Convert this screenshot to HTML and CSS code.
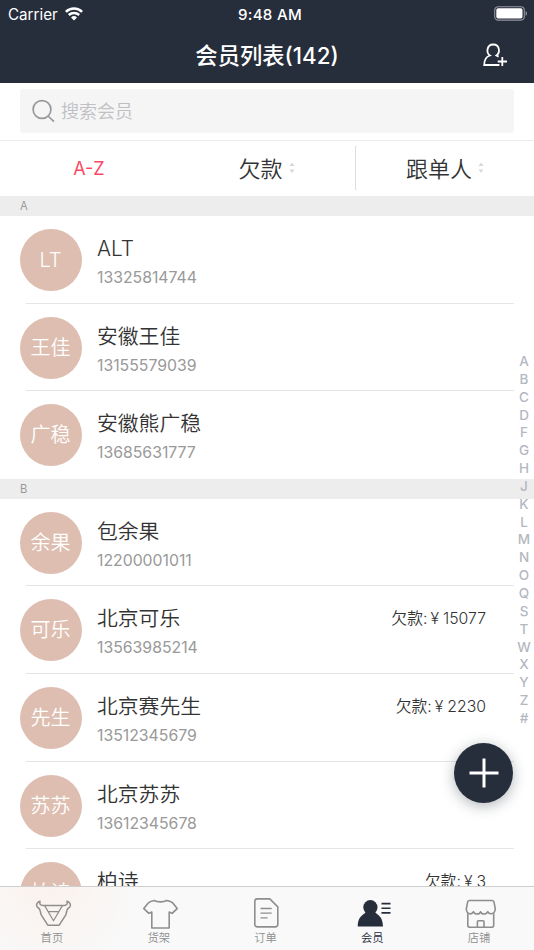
FILE: index.html
```html
<!DOCTYPE html>
<html lang="zh-CN">
<head>
    <meta charset="UTF-8">
    <meta name="viewport" content="width=device-width, initial-scale=1.0">
    <title>会员列表</title>
    <link rel="stylesheet" href="styles.css">
</head>
<body>
    <header class="header">
        <div class="status-bar">
            <div class="carrier">
                <span>Carrier</span>
                <svg width="18" height="14" viewBox="0 0 18 14" fill="none" stroke="#fff" stroke-width="2.5">
                    <path d="M0.9 4.9a11.6 11.6 0 0 1 16.2 0"/>
                    <path d="M3.8 8a7.5 7.5 0 0 1 10.4 0"/>
                    <path d="M9 13.5L6 10.5a4.3 4.3 0 0 1 6 0z" fill="#fff" stroke="none"/>
                </svg>
            </div>
            <div class="time">9:48 AM</div>
            <div class="battery">
                <svg width="34" height="15" viewBox="0 0 34 15">
                    <rect x="0.7" y="-0.3" width="29.6" height="13.4" rx="3.5" fill="none" stroke="#9296a0" stroke-width="1.1"/>
                    <rect x="2.3" y="1.3" width="26.2" height="10.2" rx="1.8" fill="#fff"/>
                    <path d="M31.6 4v4.8c1.9-.8 1.9-4 0-4.8z" fill="#9296a0"/>
                </svg>
            </div>
        </div>
        <div class="nav-bar">
            <h1>会员列表(142)</h1>
            <button class="add-member" aria-label="添加会员">
                <svg width="26" height="24" viewBox="0 0 26 24" fill="none" stroke="#fff" stroke-width="1.8">
                    <path d="M17.4 22H2.2c0-5 1.8-8.3 5.7-9.5C6 11.2 5.1 9.1 5.5 6.5 6 3.4 8.2 1.5 11.2 1.5s5.3 1.9 5.7 5c.3 2.5-.6 4.700-2.5 6l2.200 1.100"/>
                    <path d="M15.7 18.5h9.300M20.300 14v9"/>
                </svg>
            </button>
        </div>
    </header>

    <div class="search">
        <div class="search-box">
            <svg width="23" height="24" viewBox="0 0 23 24" fill="none" stroke="#999" stroke-width="1.7">
                <circle cx="10" cy="10.5" r="8.9"/>
                <path d="M16 17l6 5.6"/>
            </svg>
            <span>搜索会员</span>
        </div>
    </div>

    <div class="tabs">
        <div class="tab active">A-Z</div>
        <div class="tab">
            <span>欠款</span>
            <svg width="6" height="12" viewBox="0 0 6 12" fill="#d8d8d8"><path d="M.5 4L3 .5 5.5 4zM.5 7.5h5L3 11z"/></svg>
        </div>
        <div class="tab divided">
            <span>跟单人</span>
            <svg width="6" height="12" viewBox="0 0 6 12" fill="#d8d8d8"><path d="M.5 4L3 .5 5.5 4zM.5 7.5h5L3 11z"/></svg>
        </div>
    </div>

    <main class="members">
        <div class="letter">A</div>
        <div class="member">
            <div class="avatar">LT</div>
            <div class="info"><div class="name">ALT</div><div class="phone">13325814744</div></div>
        </div>
        <div class="member">
            <div class="avatar">王佳</div>
            <div class="info"><div class="name">安徽王佳</div><div class="phone">13155579039</div></div>
        </div>
        <div class="member last">
            <div class="avatar">广稳</div>
            <div class="info"><div class="name">安徽熊广稳</div><div class="phone">13685631777</div></div>
        </div>
        <div class="letter">B</div>
        <div class="member">
            <div class="avatar">余果</div>
            <div class="info"><div class="name">包余果</div><div class="phone">12200001011</div></div>
        </div>
        <div class="member">
            <div class="avatar">可乐</div>
            <div class="info"><div class="name">北京可乐</div><div class="phone">13563985214</div></div>
            <div class="debt">欠款:<i>¥</i>15077</div>
        </div>
        <div class="member">
            <div class="avatar">先生</div>
            <div class="info"><div class="name">北京赛先生</div><div class="phone">13512345679</div></div>
            <div class="debt">欠款:<i>¥</i>2230</div>
        </div>
        <div class="member">
            <div class="avatar">苏苏</div>
            <div class="info"><div class="name">北京苏苏</div><div class="phone">13612345678</div></div>
        </div>
        <div class="member">
            <div class="avatar">柏诗</div>
            <div class="info"><div class="name">柏诗</div></div>
            <div class="debt">欠款:<i>¥</i>3</div>
        </div>
    </main>

    <div class="index">
        <span>A</span><span>B</span><span>C</span><span>D</span><span>F</span><span>G</span><span>H</span>
        <span>J</span><span>K</span><span>L</span><span>M</span><span>N</span><span>O</span><span>Q</span>
        <span>S</span><span>T</span><span>W</span><span>X</span><span>Y</span><span>Z</span><span>#</span>
    </div>

    <button class="fab" aria-label="添加">
        <svg width="30" height="30" viewBox="0 0 30 30" stroke="#fff" stroke-width="3"><path d="M.5 15h29M15 .5v29"/></svg>
    </button>

    <nav class="tab-bar">
        <a class="item">
            <svg width="36" height="30" viewBox="0 0 36 30" fill="none" stroke="#8e8e8e" stroke-width="1.5" stroke-linejoin="round">
                <path d="M5 1.3C2 2.2.9 4.6 2 6.6c.8 1.3 2.600 1.800 3 3.600l1.200 4.600 6.600 10.400h11.400l6.600-10.400 1.200-4.600c.4-1.800 2.200-2.300 3-3.600 1.100-2 0-4.400-3-5.300.7 2.700-.3 4.200-2.800 4.200H7.800C5.300 5.500 4.300 4 5 1.300z"/>
                <path d="M9.6 5.6l8.900 15.200 8.900-15.200M13.2 11.700h10.600" stroke-width="1.2"/>
            </svg>
            <span>首页</span>
        </a>
        <a class="item">
            <svg width="36" height="30" viewBox="0 0 36 30" fill="none" stroke="#8e8e8e" stroke-width="1.6" stroke-linejoin="round">
                <path d="M12.2.5C15 2.3 21.8 2.3 24.600.5c3.200.6 5.200 1.300 6.400 2.700l4.200 5.400-5.100 4.800-2.900-1.400v16H9.800V12l-2.900 1.400-5.100-4.800L6 3.200C7.200 1.800 9 1.100 12.200.5z"/>
            </svg>
            <span>货架</span>
        </a>
        <a class="item">
            <svg width="36" height="30" viewBox="0 0 36 30" fill="none" stroke="#8e8e8e" stroke-width="1.6" stroke-linejoin="round">
                <path d="M9.3-1.1h12.500l8 8v17.500a2.500 2.500 0 0 1-2.500 2.500h-18a2.500 2.500 0 0 1-2.500-2.500V1.400a2.500 2.500 0 0 1 2.500-2.500z"/>
                <path d="M12.5 8.5h11.200M12.5 13.200h11.200M12.5 17.900h7" stroke-width="1.3"/>
            </svg>
            <span>订单</span>
        </a>
        <a class="item active">
            <svg width="36" height="30" viewBox="0 0 36 30" fill="#262d3b">
                <ellipse cx="15.4" cy="7.3" rx="7.1" ry="7.2"/>
                <path d="M11.5 11h8c0 3.300 8.500 3.200 8.500 15.500H2.800C2.800 14.200 11.500 14.300 11.500 11z"/>
                <path d="M26.5 3.600h9M26.5 8.300h9M26.5 12.900h9" stroke="#262d3b" stroke-width="1.6"/>
            </svg>
            <span>会员</span>
        </a>
        <a class="item">
            <svg width="36" height="30" viewBox="0 0 36 30" fill="none" stroke="#8e8e8e" stroke-width="1.6" stroke-linejoin="round">
                <path d="M7.500.5h22.500c1.200 0 1.700.6 2 1.600l1.200 6.300c.4 5.500-5.600 7-7.500 3.300-1.300 3.100-6 3.100-7.100 0-1.100 3.100-5.800 3.100-7.100 0C9.600 15.400 3.800 13.900 4.400 8.400l1.200-6.300c.3-1 .8-1.600 1.900-1.600z"/>
                <path d="M5.800 13.300v12a2 2 0 0 0 2 2h21.900a2 2 0 0 0 2-2v-12M15.400 27v-5.300a1 1 0 0 1 1-1H21a1 1 0 0 1 1 1V27"/>
            </svg>
            <span>店铺</span>
        </a>
    </nav>
</body>
</html>
```
FILE: styles.css
```css
* {
    box-sizing: border-box;
}
body {
    position: relative;
    width: 534px;
    height: 950px;
    margin: 0;
    overflow: hidden;
    background: #fff;
    color: #333;
    font-family: Inter, "Noto Sans CJK SC", sans-serif;
    font-weight: 350;
}
svg {
    display: block;
    overflow: visible;
}
button {
    padding: 0;
    border: none;
    background: none;
}
.header {
    height: 83px;
    background: #262d3b;
    color: #fff;
}
.status-bar {
    display: grid;
    grid-template-columns: 1fr auto 1fr;
    align-items: center;
    height: 28px;
    padding: 0 6px 0 8px;
    font-size: 15.2px;
    font-weight: 400;
}
.carrier {
    display: flex;
    align-items: center;
    gap: 7px;
}
.time {
    padding-left: 4px;
    font-size: 15.1px;
    font-weight: 500;
    letter-spacing: 0.3px;
}
.battery {
    justify-self: end;
}
.nav-bar {
    display: grid;
    grid-template-columns: 1fr auto 1fr;
    align-items: center;
    height: 54px;
}
.nav-bar h1 {
    grid-column: 2;
    margin: 0;
    padding-bottom: 2px;
    font-size: 22.3px;
    font-weight: 500;
}
.add-member {
    justify-self: end;
    margin-right: 26px;
}

/* search */
.search {
    height: 58px;
    padding: 6px 20px 0;
    border-bottom: 1px solid #ebebeb;
}
.search-box {
    display: flex;
    align-items: center;
    gap: 6px;
    height: 44px;
    padding-left: 12px;
    border-radius: 3px;
    background: #f5f5f5;
    color: #c0c0c4;
    font-size: 18px;
}
.search-box span {
    padding-bottom: 2px;
}

/* sort tabs */
.tabs {
    display: grid;
    grid-template-columns: 178px 177px 179px;
    align-items: center;
    height: 53px;
    margin-bottom: 2px;
}
.tab {
    display: flex;
    align-items: center;
    justify-content: center;
    gap: 6px;
    height: 44px;
    font-size: 22px;
}
.tab span {
    padding-bottom: 2px;
}
.tab.active {
    padding-top: 1px;
    color: #fb4963;
    font-size: 18px;
    font-weight: 400;
}
.divided {
    border-left: 1px solid #ddd;
}

/* member list */
.letter {
    height: 20px;
    padding-left: 20px;
    background: #ededed;
    color: #999;
    font-size: 11.2px;
    font-weight: 400;
    line-height: 21px;
}
.member {
    display: flex;
    position: relative;
    height: 87.6px;
    padding: 13px 48px 0 19.5px;
}
.member::after {
    content: "";
    position: absolute;
    left: 26px;
    right: 20px;
    bottom: 0;
    height: 1px;
    background: #e5e5e5;
}
.member.last::after {
    display: none;
}
.avatar {
    width: 62px;
    height: 62px;
    border-radius: 50%;
    background: #debeb0;
    color: #fff;
    font-size: 20px;
    line-height: 62px;
    text-align: center;
}
.info {
    flex: 1;
    padding: 5px 0 0 15.5px;
}
.name {
    height: 29px;
    font-size: 20.8px;
    line-height: 30px;
}
.phone {
    color: #999;
    font-size: 15.8px;
    font-weight: 400;
    line-height: 29px;
}
.debt {
    padding-top: 7px;
    font-size: 15.8px;
    line-height: 25px;
}
.debt i {
    margin: 0 4px 0 3px;
    font-style: normal;
}

.index {
    display: flex;
    flex-direction: column;
    position: absolute;
    top: 353px;
    right: 0;
    width: 20px;
    color: #b4b8bf;
    font-size: 13.5px;
    font-weight: 500;
    line-height: 17.85px;
    text-align: center;
}
.fab {
    display: flex;
    align-items: center;
    justify-content: center;
    position: absolute;
    top: 743px;
    left: 454px;
    width: 59px;
    height: 60px;
    border-radius: 50%;
    background: #262d3b;
    box-shadow: 0 3px 14px rgba(38, 45, 59, 0.35);
}

/* bottom bar */
.tab-bar {
    display: grid;
    grid-template-columns: repeat(5, 1fr);
    position: absolute;
    left: 0;
    right: 0;
    bottom: 0;
    height: 64px;
    padding-top: 13px;
    border-top: 1px solid #cfcfcf;
    background: radial-gradient(circle at 50px 0, #faf2ee, #f9f9f9 90px);
}
.item {
    display: flex;
    flex-direction: column;
    align-items: center;
    padding-right: 3px;
    color: #8e8e8e;
    font-size: 11.3px;
    line-height: 16px;
}
.item svg {
    margin-left: 2px;
}
.item.active {
    color: #262d3b;
}
```
